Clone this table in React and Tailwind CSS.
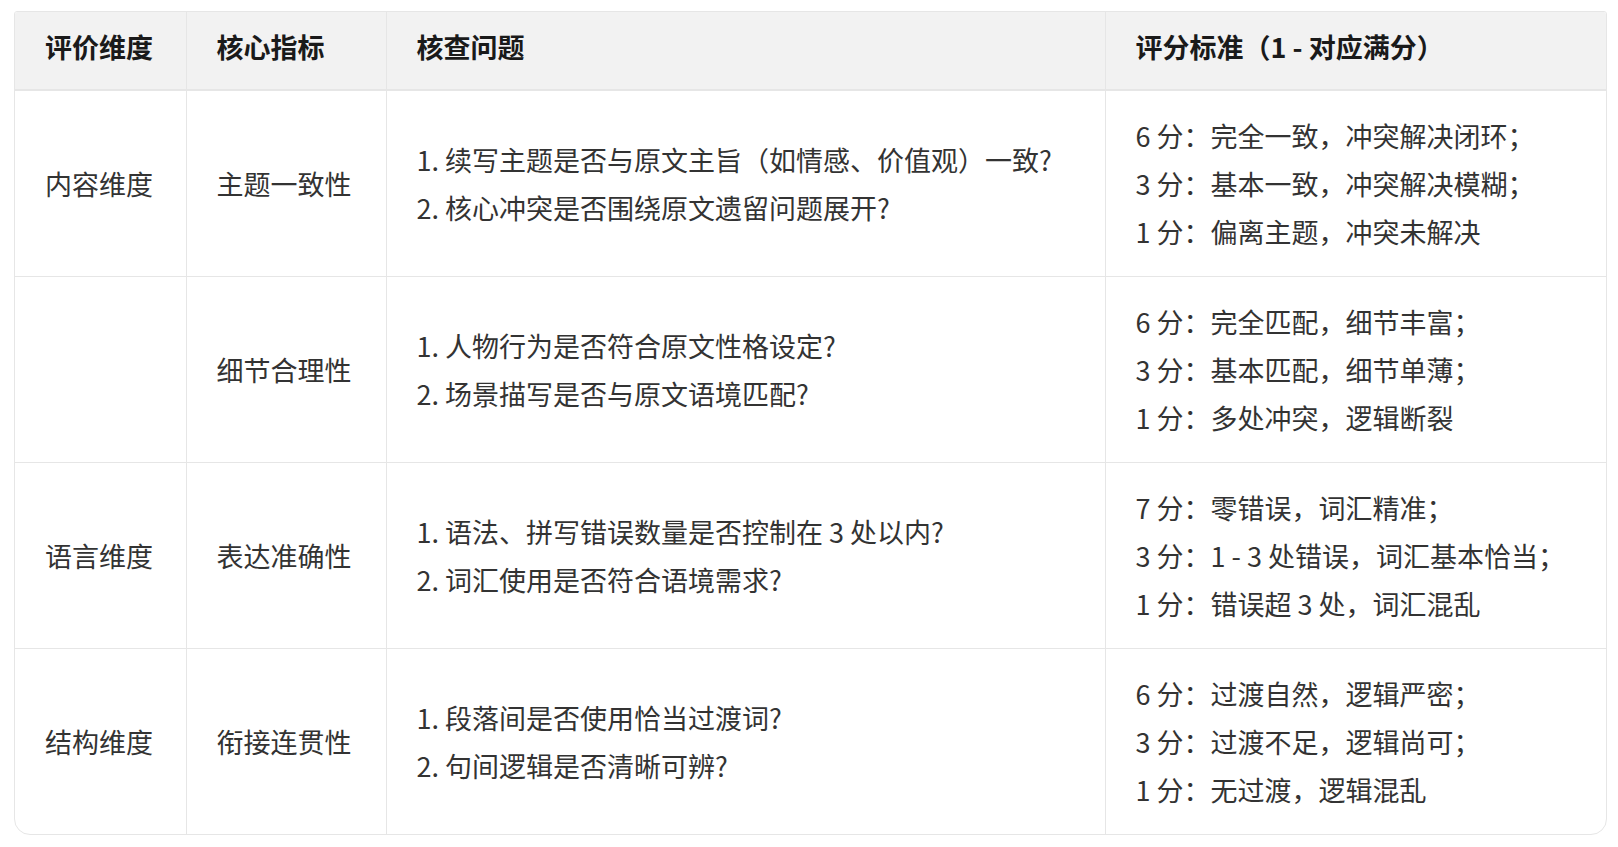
const rows = [
  {
    dim: '内容维度',
    metric: '主题一致性',
    questions: ['1. 续写主题是否与原文主旨（如情感、价值观）一致?', '2. 核心冲突是否围绕原文遗留问题展开?'],
    scores: ['6 分：完全一致，冲突解决闭环；', '3 分：基本一致，冲突解决模糊；', '1 分：偏离主题，冲突未解决'],
  },
  {
    dim: '',
    metric: '细节合理性',
    questions: ['1. 人物行为是否符合原文性格设定?', '2. 场景描写是否与原文语境匹配?'],
    scores: ['6 分：完全匹配，细节丰富；', '3 分：基本匹配，细节单薄；', '1 分：多处冲突，逻辑断裂'],
  },
  {
    dim: '语言维度',
    metric: '表达准确性',
    questions: ['1. 语法、拼写错误数量是否控制在 3 处以内?', '2. 词汇使用是否符合语境需求?'],
    scores: ['7 分：零错误，词汇精准；', '3 分：1 - 3 处错误，词汇基本恰当；', '1 分：错误超 3 处，词汇混乱'],
  },
  {
    dim: '结构维度',
    metric: '衔接连贯性',
    questions: ['1. 段落间是否使用恰当过渡词?', '2. 句间逻辑是否清晰可辨?'],
    scores: ['6 分：过渡自然，逻辑严密；', '3 分：过渡不足，逻辑尚可；', '1 分：无过渡，逻辑混乱'],
  },
]

function Lines({ items }) {
  return (
    <div>
      {items.map((t) => (
        <div key={t}>{t}</div>
      ))}
    </div>
  )
}

function App() {
  return (
    <div
      className="min-h-screen bg-white pt-[11px] pl-[14px]"
      style={{ fontFamily: '"Noto Sans CJK SC", "Noto Sans", sans-serif' }}
    >
      <div className="w-[1593px] overflow-hidden rounded-t-[3px] rounded-b-[16px] border border-[#e6e6e6]">
        <table className="w-full table-fixed border-collapse text-[27px] text-[#333333]">
          <colgroup>
            <col className="w-[171px]" />
            <col className="w-[200px]" />
            <col className="w-[719px]" />
            <col />
          </colgroup>
          <thead>
            <tr className="border-b-2 border-[#e6e6e6] bg-[#f2f2f2] text-left">
              <th className="px-[30px] pt-[16px] pb-[24px] leading-[37px] font-bold text-[#1a1a1a]">评价维度</th>
              <th className="border-l border-[#e6e6e6] px-[30px] pt-[16px] pb-[24px] leading-[37px] font-bold text-[#1a1a1a]">核心指标</th>
              <th className="border-l border-[#e6e6e6] px-[30px] pt-[16px] pb-[24px] leading-[37px] font-bold text-[#1a1a1a]">核查问题</th>
              <th className="border-l border-[#e6e6e6] px-[30px] pt-[16px] pb-[24px] leading-[37px] font-bold text-[#1a1a1a]">评分标准（1 - 对应满分）</th>
            </tr>
          </thead>
          <tbody>
            {rows.map((r, i) => (
              <tr key={r.metric} className={i > 0 ? 'border-t border-[#e6e6e6]' : ''}>
                <td className="px-[30px] pt-[21px] pb-[20px] align-middle leading-[48px]">{r.dim}</td>
                <td className="border-l border-[#e6e6e6] px-[30px] pt-[21px] pb-[20px] align-middle leading-[48px]">{r.metric}</td>
                <td className="border-l border-[#e6e6e6] px-[30px] pt-[21px] pb-[20px] align-middle leading-[48px]">
                  <Lines items={r.questions} />
                </td>
                <td className="border-l border-[#e6e6e6] px-[30px] pt-[21px] pb-[20px] align-middle leading-[48px]">
                  <Lines items={r.scores} />
                </td>
              </tr>
            ))}
          </tbody>
        </table>
      </div>
    </div>
  )
}

export default App
